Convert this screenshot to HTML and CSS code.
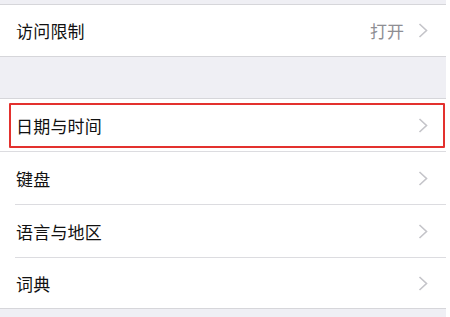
FILE: index.html
```html
<!DOCTYPE html>
<html lang="zh">
<head>
<meta charset="utf-8">
<link rel="stylesheet" href="styles.css">
</head>
<body>
<div class="screen">
  <div class="gap-top"></div>
  <div class="group">
    <div class="row first">
      <span class="label">访问限制</span>
      <span class="value">打开</span>
      <svg class="chev" viewBox="0 0 10 15"><path d="M1.5 1 L8.5 7.5 L1.5 14" /></svg>
    </div>
  </div>
  <div class="gap"></div>
  <div class="group">
    <div class="row highlighted">
      <span class="label">日期与时间</span>
      <svg class="chev" viewBox="0 0 10 15"><path d="M1.5 1 L8.5 7.5 L1.5 14" /></svg>
      <div class="mark"></div>
    </div>
    <div class="row">
      <span class="label">键盘</span>
      <svg class="chev" viewBox="0 0 10 15"><path d="M1.5 1 L8.5 7.5 L1.5 14" /></svg>
    </div>
    <div class="row">
      <span class="label">语言与地区</span>
      <svg class="chev" viewBox="0 0 10 15"><path d="M1.5 1 L8.5 7.5 L1.5 14" /></svg>
    </div>
    <div class="row last">
      <span class="label">词典</span>
      <svg class="chev" viewBox="0 0 10 15"><path d="M1.5 1 L8.5 7.5 L1.5 14" /></svg>
    </div>
  </div>
  <div class="gap-bottom"></div>
</div>
</body>
</html>
```
FILE: styles.css
```css
html, body {
  margin: 0;
  padding: 0;
  background: #ffffff;
}
body {
  width: 450px;
  height: 317px;
  overflow: hidden;
  font-family: "Noto Sans CJK SC", "Noto Sans", sans-serif;
}
.screen {
  width: 446px;
  background: #efeff4;
}
.gap-top {
  height: 4px;
}
.gap {
  height: 41px;
}
.gap-bottom {
  height: 9px;
}
.group {
  background: #ffffff;
  border-top: 1px solid #d6d6da;
  border-bottom: 1px solid #d6d6da;
}
.row {
  position: relative;
  height: 52px;
  display: flex;
  align-items: center;
  padding: 0 18px 0 16px;
}
.row.first {
  height: 51px;
}
.row.last {
  height: 50px;
}
.group .row + .row {
  border-top: 1px solid #dcdce0;
  margin-left: 15px;
  padding-left: 1px;
}
.group .row.highlighted + .row {
  margin-left: 0;
  padding-left: 16px;
}
.label {
  flex: 1;
  font-size: 17px;
  color: #111111;
  line-height: 1;
  letter-spacing: 0.2px;
}
.value {
  font-size: 17px;
  color: #8e8e93;
  margin-right: 14px;
  line-height: 1;
}
.chev {
  width: 10px;
  height: 15px;
  fill: none;
  stroke: #c4c4c9;
  stroke-width: 1.6;
}
.mark {
  position: absolute;
  left: 9px;
  right: 1px;
  top: 4px;
  bottom: 3px;
  border: 2px solid #e3312e;
  border-radius: 1px;
}
```
